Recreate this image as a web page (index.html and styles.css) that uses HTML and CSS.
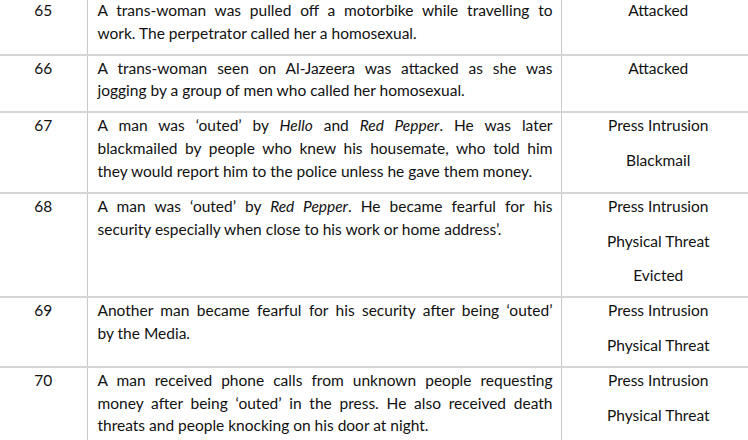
FILE: index.html
```html
<!DOCTYPE html>
<html>
<head>
<meta charset="utf-8">
<link rel="stylesheet" href="styles.css">
</head>
<body>
<table class="cases">
  <colgroup><col class="c-num"><col class="c-desc"><col class="c-out"></colgroup>
  <tr>
    <td class="num">65</td>
    <td class="desc"><span class="ln">A trans-woman was pulled off a motorbike while travelling to</span><span class="last">work. The perpetrator called her a homosexual.</span></td>
    <td class="out"><p>Attacked</p></td>
  </tr>
  <tr>
    <td class="num">66</td>
    <td class="desc"><span class="ln">A trans-woman seen on Al-Jazeera was attacked as she was</span><span class="last">jogging by a group of men who called her homosexual.</span></td>
    <td class="out"><p>Attacked</p></td>
  </tr>
  <tr>
    <td class="num">67</td>
    <td class="desc"><span class="ln">A man was ‘outed’ by <i>Hello</i> and <i>Red Pepper</i>. He was later</span><span class="ln">blackmailed by people who knew his housemate, who told him</span><span class="last">they would report him to the police unless he gave them money.</span></td>
    <td class="out"><p>Press Intrusion</p><p>Blackmail</p></td>
  </tr>
  <tr>
    <td class="num">68</td>
    <td class="desc"><span class="ln">A man was ‘outed’ by <i>Red Pepper</i>. He became fearful for his</span><span class="last">security especially when close to his work or home address’.</span></td>
    <td class="out"><p>Press Intrusion</p><p>Physical Threat</p><p>Evicted</p></td>
  </tr>
  <tr>
    <td class="num">69</td>
    <td class="desc"><span class="ln">Another man became fearful for his security after being ‘outed’</span><span class="last">by the Media.</span></td>
    <td class="out"><p>Press Intrusion</p><p>Physical Threat</p></td>
  </tr>
  <tr>
    <td class="num">70</td>
    <td class="desc"><span class="ln">A man received phone calls from unknown people requesting</span><span class="ln">money after being ‘outed’ in the press. He also received death</span><span class="last">threats and people knocking on his door at night.</span></td>
    <td class="out"><p>Press Intrusion</p><p>Physical Threat</p></td>
  </tr>
</table>
</body>
</html>
```

FILE: styles.css
```css
html, body {
  margin: 0;
  padding: 0;
  background: #ffffff;
  overflow: hidden;
}
body {
  width: 748px;
  height: 440px;
  font-family: Lato, "Open Sans", sans-serif;
  font-size: 15.5px;
  line-height: 22.7px;
  color: #111111;
}
.cases {
  border-collapse: collapse;
  table-layout: fixed;
  width: 755px;
  margin-top: -4px;
}
.c-num { width: 87px; }
.c-desc { width: 474px; }
.c-out { width: 194px; }
.cases td {
  vertical-align: top;
  border-top: 2px solid #d6d6d6;
  border-bottom: 2px solid #d6d6d6;
  padding: 1px 0 9.3px 0;
}
.cases td + td {
  border-left: 1px solid #c9c9c9;
}
.cases tr:first-child td {
  border-top: none;
  padding-top: 3px;
}
.num {
  text-align: center;
}
.desc {
  padding-left: 10px !important;
  padding-right: 8px !important;
}
.ln {
  display: block;
  text-align: justify;
  text-align-last: justify;
}
.last {
  display: block;
  text-align: left;
}
.out {
  text-align: center;
}
.out p {
  margin: 0 0 12px 0;
}
.out p:last-child {
  margin-bottom: 0;
}
```
